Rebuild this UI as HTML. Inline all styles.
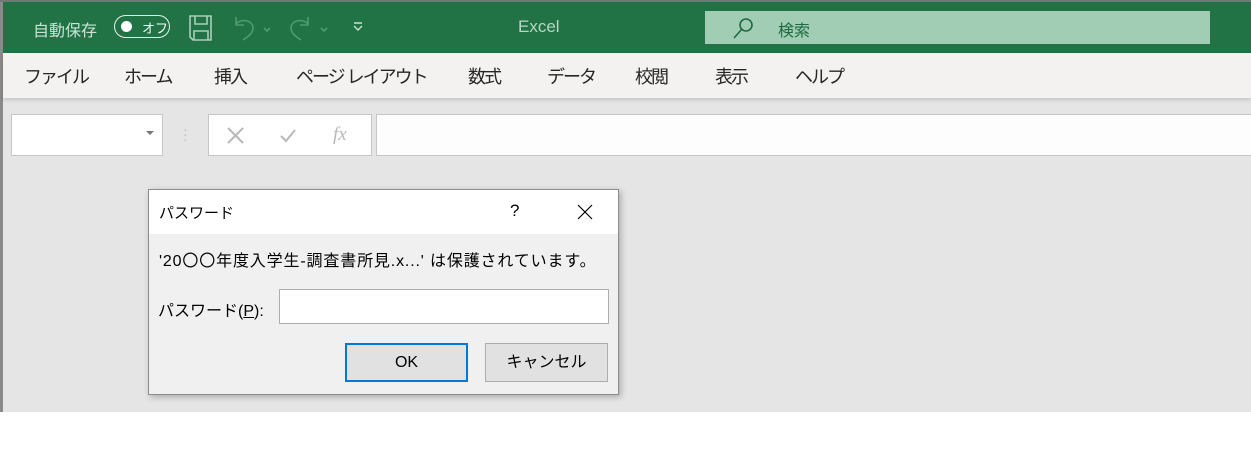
<!DOCTYPE html>
<html><head><meta charset="utf-8"><style>
*{margin:0;padding:0;box-sizing:border-box}
body{width:1251px;height:464px;position:relative;background:#fff;font-family:"Liberation Sans","Noto Sans CJK JP",sans-serif;overflow:hidden}
.a{position:absolute}
.t span{letter-spacing:-2px}
</style></head><body>
<div class="a" style="left:0;top:0;width:1251px;height:412px;background:#e5e5e5"></div>
<div class="a" style="left:0;top:0;width:1251px;height:2px;background:#767676"></div>
<div class="a" style="left:3px;top:2px;width:1248px;height:51px;background:#217346"></div>
<div class="a" style="left:0;top:2px;width:3px;height:410px;background:#8a8a8a"></div>
<div class="a" style="left:33px;top:17px;color:#c9e2d3;font-size:16px">自動保存</div>
<div class="a" style="left:114px;top:15px;width:56px;height:23px;border:1.5px solid #e8f2ec;border-radius:12px"></div>
<div class="a" style="left:121px;top:21px;width:11px;height:11px;border-radius:50%;background:#fff"></div>
<div class="a" style="left:142px;top:18px;color:#fff;font-size:13px">オフ</div>
<svg class="a" style="left:188px;top:14px" width="26" height="28" viewBox="0 0 26 28" fill="none" stroke="#a9cfb8" stroke-width="1.6"><path d="M2 2h21v24H5l-3-3z"/><path d="M7 2v8h12V2M6 26v-9h14v9"/></svg>
<svg class="a" style="left:230px;top:14px" width="110" height="28" viewBox="0 0 110 28" fill="none" stroke="#4f9a6e" stroke-width="1.6"><path d="M6 3v8h8M6 10c5-6 17-4 17 4 0 6-6 9-10 12"/><path d="M34 14l3 3 3-3"/><path d="M78 3v8h-8M78 10c-5-6-17-4-17 4 0 6 6 9 10 12"/><path d="M91 14l3 3 3-3"/></svg>
<svg class="a" style="left:352px;top:20px" width="12" height="12" viewBox="0 0 12 12" fill="none" stroke="#c9e2d3" stroke-width="1.4"><path d="M2 3h8M2 6l4 4 4-4"/></svg>
<div class="a" style="left:518px;top:17px;color:#b5d6c2;font-size:17px">Excel</div>
<div class="a" style="left:705px;top:11px;width:505px;height:33px;background:#a0cdb4"></div>
<svg class="a" style="left:732px;top:16px" width="24" height="24" viewBox="0 0 24 24" fill="none" stroke="#1e6b41" stroke-width="1.6"><circle cx="14" cy="9" r="6"/><path d="M10 13l-8 9"/></svg>
<div class="a" style="left:778px;top:17px;color:#1e6b41;font-size:16px">検索</div>
<div class="a" style="left:3px;top:53px;width:1248px;height:45px;background:#f3f2f1;box-shadow:0 2px 4px rgba(0,0,0,.15)"></div>
<div class="a t" style="top:63px;left:0;font-size:18px;color:#262626;white-space:nowrap">
<span class="a" style="left:24px">ファイル</span><span class="a" style="left:124px">ホーム</span><span class="a" style="left:214px">挿入</span><span class="a" style="left:296px">ページ レイアウト</span><span class="a" style="left:468px">数式</span><span class="a" style="left:547px">データ</span><span class="a" style="left:635px">校閲</span><span class="a" style="left:715px">表示</span><span class="a" style="left:795px">ヘルプ</span></div>
<div class="a" style="left:11px;top:114px;width:152px;height:42px;background:#fff;border:1px solid #c6c6c6"></div>
<div class="a" style="left:146px;top:131px;border:4px solid transparent;border-top:4px solid #777;border-bottom:0"></div>
<div class="a" style="left:183px;top:127px;color:#bbb;font-size:14px;line-height:5px">·<br>·<br>·</div>
<div class="a" style="left:208px;top:114px;width:164px;height:42px;background:#fff;border:1px solid #c6c6c6"></div>
<svg class="a" style="left:225px;top:126px" width="110" height="20" viewBox="0 0 110 20" fill="none" stroke="#b8b8b8" stroke-width="2"><path d="M3 2l15 15M18 2L3 17"/><path d="M56 10l5 5 9-11"/></svg>
<div class="a" style="left:333px;top:124px;color:#b8b8b8;font-size:19px;font-style:italic;font-family:'Liberation Serif',serif">fx</div>
<div class="a" style="left:376px;top:114px;width:880px;height:42px;background:#fdfdfd;border:1px solid #c6c6c6"></div>
<div class="a" style="left:148px;top:189px;width:471px;height:206px;background:#f0f0f0;border:1px solid #8c8c8c;box-shadow:2px 2px 6px rgba(0,0,0,.25)">
<div class="a" style="left:0;top:0;width:469px;height:44px;background:#fff"></div>
<div class="a" style="left:10px;top:12px;font-size:15px;color:#000">パスワード</div>
<div class="a" style="left:361px;top:11px;font-size:17px;color:#000">?</div>
<svg class="a" style="left:428px;top:14px" width="16" height="16" viewBox="0 0 16 16" stroke="#000" stroke-width="1.2"><path d="M1 1l14 14M15 1L1 15"/></svg>
<div class="a" style="left:10px;top:57px;font-size:16px;color:#000;white-space:nowrap;letter-spacing:0.85px">'20〇〇年度入学生-調査書所見.x...' は保護されています。</div>
<div class="a" style="left:9px;top:107px;font-size:16px;color:#000;white-space:nowrap">パスワード(<u>P</u>):</div>
<div class="a" style="left:130px;top:99px;width:330px;height:35px;background:#fff;border:1px solid #adadad"></div>
<div class="a" style="left:196px;top:153px;width:123px;height:39px;background:#e1e1e1;border:2px solid #0078d7;text-align:center;line-height:35px;font-size:16px">OK</div>
<div class="a" style="left:336px;top:153px;width:123px;height:39px;background:#e1e1e1;border:1px solid #adadad;text-align:center;line-height:37px;font-size:16px">キャンセル</div>
</div>
</body></html>
